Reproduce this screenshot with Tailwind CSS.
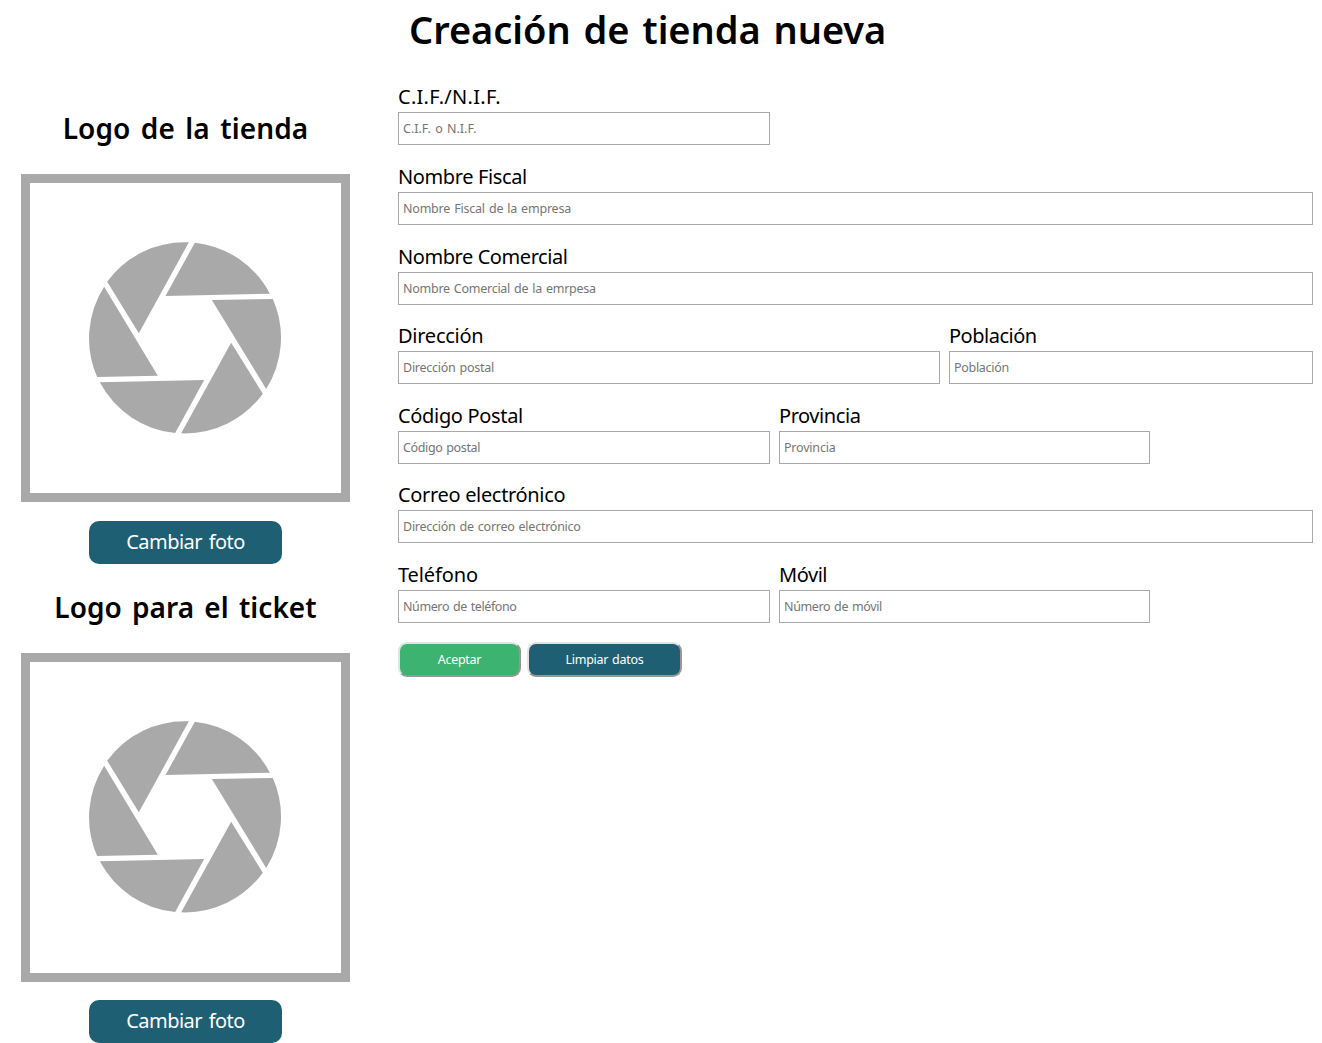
<!DOCTYPE html>
<html lang="es">
<head>
<meta charset="utf-8">
<title>Creación de tienda nueva</title>
<script src="https://cdn.jsdelivr.net/npm/@tailwindcss/browser@4"></script>
</head>
<body class="bg-white text-black font-['Noto_Sans','Open_Sans',sans-serif] h-[1043px] overflow-hidden">
<svg class="hidden">
  <symbol id="aperture" viewBox="1.5 9 630 630">
    <path d="M328 37A288 288 0 0 0 83 155L178 310Z"/>
    <path d="M346 38L258 198L571 191A288 288 0 0 0 346 38Z"/>
    <path d="M397 210L580 207A288 288 0 0 1 560 477Z"/>
    <path d="M455 338L550 491A288 288 0 0 1 305 610Z"/>
    <path d="M374 450L287 609A288 288 0 0 1 61 457Z"/>
    <path d="M235 437L53 441A288 288 0 0 1 74 170Z"/>
  </symbol>
</svg>
<header class="flex h-[60px] pl-[409px]">
  <h1 class="whitespace-nowrap text-[38px] leading-[58px] font-semibold tracking-[-0.04px] [word-spacing:3px]">Creación de tienda nueva</h1>
</header>
<main class="flex">
  <aside class="w-[329px] ml-[21px] mr-12 shrink-0">
    <section class="flex h-[479px] flex-col items-center pt-12">
      <h2 class="h-[66px] shrink-0 text-[28px] leading-10 font-semibold tracking-[0.1px] [word-spacing:3px]">Logo de la tienda</h2>
      <div class="flex h-[328px] w-[329px] shrink-0 items-center justify-center border-[9px] border-[#a9a9a9]">
        <svg class="mr-px size-[210px] fill-[#a9a9a9]"><use href="#aperture"/></svg>
      </div>
      <button class="mt-[19px] h-[43px] w-[193px] shrink-0 rounded-[10px] bg-[#1f5f73] pb-0.5 text-xl leading-6 tracking-[-0.53px] [word-spacing:2px] text-white">Cambiar foto</button>
    </section>
    <section class="flex h-[504px] flex-col items-center pt-12">
      <h2 class="h-[66px] shrink-0 text-[28px] leading-10 font-semibold tracking-[0.02px] [word-spacing:3px]">Logo para el ticket</h2>
      <div class="flex h-[329px] w-[329px] shrink-0 items-center justify-center border-[9px] border-[#a9a9a9]">
        <svg class="mr-px mb-px size-[210px] fill-[#a9a9a9]"><use href="#aperture"/></svg>
      </div>
      <button class="mt-[18px] h-[43px] w-[193px] shrink-0 rounded-[10px] bg-[#1f5f73] pb-0.5 text-xl leading-6 tracking-[-0.53px] [word-spacing:2px] text-white">Cambiar foto</button>
    </section>
  </aside>
  <form class="w-[915px] pt-[25.45px]">
    <div class="flex h-[79.6px]">
      <label class="block w-[372px] text-xl leading-6 tracking-[0.28px]"><span class="block h-[27px]">C.I.F./N.I.F.</span>
        <input placeholder="C.I.F. o N.I.F." class="block h-[33px] w-full border border-[#a9a9a9] px-1 text-[12.5px] leading-5 tracking-[0px] [word-spacing:1px] placeholder:text-[#757575]"></label>
    </div>
    <div class="flex h-[79.6px]">
      <label class="block w-full text-xl leading-6 tracking-[-0.38px]"><span class="block h-[27px]">Nombre Fiscal</span>
        <input placeholder="Nombre Fiscal de la empresa" class="block h-[33px] w-full border border-[#a9a9a9] px-1 text-[12.5px] leading-5 tracking-[-0.21px] [word-spacing:1px] placeholder:text-[#757575]"></label>
    </div>
    <div class="flex h-[79.6px]">
      <label class="block w-full text-xl leading-6 tracking-[-0.43px]"><span class="block h-[27px]">Nombre Comercial</span>
        <input placeholder="Nombre Comercial de la emrpesa" class="block h-[33px] w-full border border-[#a9a9a9] px-1 text-[12.5px] leading-5 tracking-[-0.26px] [word-spacing:1px] placeholder:text-[#757575]"></label>
    </div>
    <div class="flex h-[79.6px] gap-[9px]">
      <label class="block w-[542px] text-xl leading-6 tracking-[-0.25px]"><span class="block h-[27px]">Dirección</span>
        <input placeholder="Dirección postal" class="block h-[33px] w-full border border-[#a9a9a9] px-1 text-[12.5px] leading-5 tracking-[-0.25px] [word-spacing:1px] placeholder:text-[#757575]"></label>
      <label class="block w-[364px] text-xl leading-6 tracking-[-0.5px]"><span class="block h-[27px]">Población</span>
        <input placeholder="Población" class="block h-[33px] w-full border border-[#a9a9a9] px-1 text-[12.5px] leading-5 tracking-[-0.3px] placeholder:text-[#757575]"></label>
    </div>
    <div class="flex h-[79.6px] gap-[9px]">
      <label class="block w-[372px] text-xl leading-6 tracking-[-0.33px]"><span class="block h-[27px]">Código Postal</span>
        <input placeholder="Código postal" class="block h-[33px] w-full border border-[#a9a9a9] px-1 text-[12.5px] leading-5 tracking-[-0.37px] [word-spacing:1px] placeholder:text-[#757575]"></label>
      <label class="block w-[371px] text-xl leading-6 tracking-[-0.43px]"><span class="block h-[27px]">Provincia</span>
        <input placeholder="Provincia" class="block h-[33px] w-full border border-[#a9a9a9] px-1 text-[12.5px] leading-5 tracking-[-0.2px] placeholder:text-[#757575]"></label>
    </div>
    <div class="flex h-[79.6px]">
      <label class="block w-full text-xl leading-6 tracking-[-0.33px]"><span class="block h-[27px]">Correo electrónico</span>
        <input placeholder="Dirección de correo electrónico" class="block h-[33px] w-full border border-[#a9a9a9] px-1 text-[12.5px] leading-5 tracking-[-0.25px] [word-spacing:1px] placeholder:text-[#757575]"></label>
    </div>
    <div class="flex h-[79.1px] gap-[9px]">
      <label class="block w-[372px] text-xl leading-6 tracking-[-0.11px]"><span class="block h-[27px]">Teléfono</span>
        <input placeholder="Número de teléfono" class="block h-[33px] w-full border border-[#a9a9a9] px-1 text-[12.5px] leading-5 tracking-[-0.4px] [word-spacing:1px] placeholder:text-[#757575]"></label>
      <label class="block w-[371px] text-xl leading-6 tracking-[-0.45px]"><span class="block h-[27px]">Móvil</span>
        <input placeholder="Número de móvil" class="block h-[33px] w-full border border-[#a9a9a9] px-1 text-[12.5px] leading-5 tracking-[-0.37px] [word-spacing:1px] placeholder:text-[#757575]"></label>
    </div>
    <div class="flex gap-1.5 text-[12.5px] leading-5 text-white">
      <button type="button" class="h-[35px] w-[123px] rounded-[9px] border-2 border-t-[#e3e3e3] border-l-[#e3e3e3] border-r-[#979797] border-b-[#979797] bg-[#3cb371] tracking-[-0.3px]">Aceptar</button>
      <button type="button" class="h-[35px] w-[155px] rounded-[9px] border-2 border-t-[#e3e3e3] border-l-[#e3e3e3] border-r-[#979797] border-b-[#979797] bg-[#1f5f73] tracking-[-0.28px] [word-spacing:1px]">Limpiar datos</button>
    </div>
  </form>
</main>
</body>
</html>
